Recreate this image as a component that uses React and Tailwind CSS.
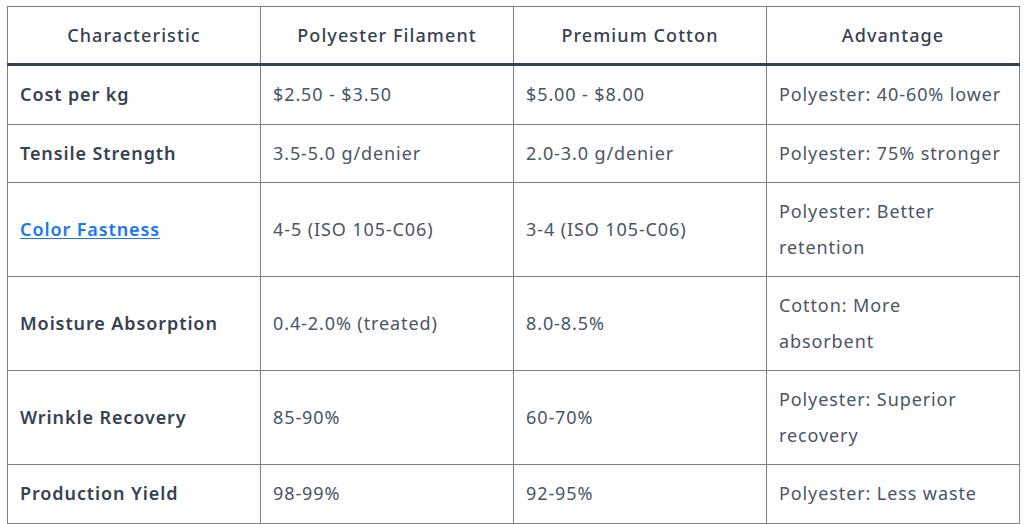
import React from "react";

const rows = [
  { name: "Cost per kg", poly: "$2.50 - $3.50", cotton: "$5.00 - $8.00", adv: "Polyester: 40-60% lower" },
  { name: "Tensile Strength", poly: "3.5-5.0 g/denier", cotton: "2.0-3.0 g/denier", adv: "Polyester: 75% stronger" },
  { name: "Color Fastness", link: true, poly: "4-5 (ISO 105-C06)", cotton: "3-4 (ISO 105-C06)", adv: "Polyester: Better retention" },
  { name: "Moisture Absorption", poly: "0.4-2.0% (treated)", cotton: "8.0-8.5%", adv: "Cotton: More\nabsorbent" },
  { name: "Wrinkle Recovery", poly: "85-90%", cotton: "60-70%", adv: "Polyester: Superior recovery" },
  { name: "Production Yield", poly: "98-99%", cotton: "92-95%", adv: "Polyester: Less waste" },
];

const headers = ["Characteristic", "Polyester Filament", "Premium Cotton", "Advantage"];

export default function App() {
  return (
    <div className="min-h-screen bg-white pt-[6px] pl-[7px] font-['Noto_Sans',sans-serif]">
      <table className="w-[1013px] table-fixed border-collapse text-[18px] tracking-[0.05em] text-[#4b5563]">
        <thead>
          <tr className="border-b-[3px] border-b-[#374151]">
            {headers.map((h) => (
              <th
                key={h}
                className="border border-[#7a818c] px-3 py-[11px] text-center font-medium leading-[34px] tracking-[0.06em] text-[#374151]"
              >
                {h}
              </th>
            ))}
          </tr>
        </thead>
        <tbody>
          {rows.map((r) => (
            <tr key={r.name}>
              <td className="border border-[#7a818c] px-3 py-[11px] align-middle font-semibold leading-[35.5px] text-[#374151]">
                {r.link ? (
                  <a href="#" className="text-[#1877f2] underline underline-offset-2">
                    {r.name}
                  </a>
                ) : (
                  r.name
                )}
              </td>
              <td className="border border-[#7a818c] px-3 py-[11px] leading-[35.5px]">{r.poly}</td>
              <td className="border border-[#7a818c] px-3 py-[11px] leading-[35.5px]">{r.cotton}</td>
              <td className="whitespace-pre-line border border-[#7a818c] px-3 py-[11px] leading-[35.5px]">{r.adv}</td>
            </tr>
          ))}
        </tbody>
      </table>
    </div>
  );
}
